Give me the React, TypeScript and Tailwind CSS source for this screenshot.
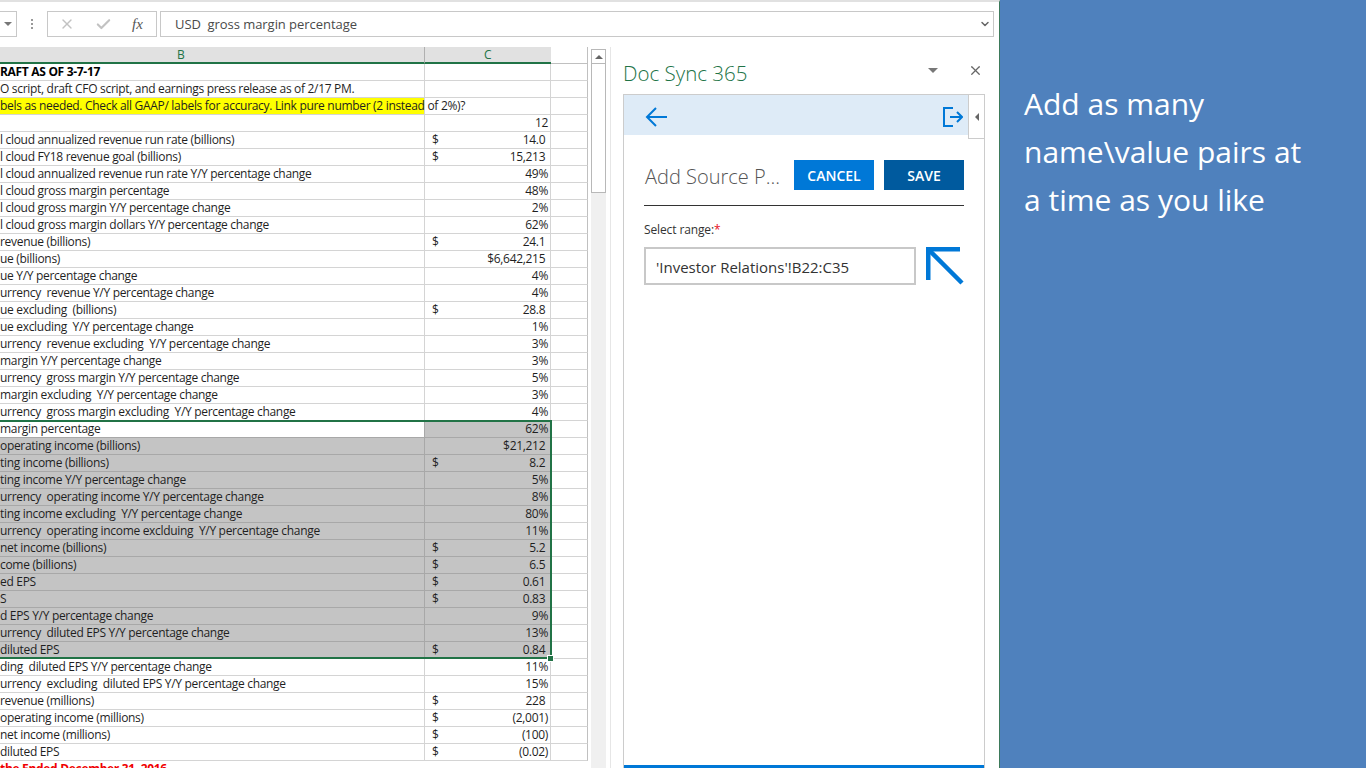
import { X, Check, ChevronDown } from "lucide-react";

type Row = { b?: string; d?: boolean; c?: string };

const rows: Row[] = [
	{ b: "RAFT AS OF 3-7-17" },
	{ b: "O script, draft CFO script, and earnings press release as of 2/17 PM." },
	{ b: "bels as needed. Check all GAAP/ labels for accuracy. Link pure number (2 instead of 2%)?" },
	{ c: "12" },
	{ b: "l cloud annualized revenue run rate (billions)", d: true, c: "14.0 " },
	{ b: "l cloud FY18 revenue goal (billions)", d: true, c: "15,213 " },
	{ b: "l cloud annualized revenue run rate Y/Y percentage change", c: "49%" },
	{ b: "l cloud gross margin percentage", c: "48%" },
	{ b: "l cloud gross margin Y/Y percentage change", c: "2%" },
	{ b: "l cloud gross margin dollars Y/Y percentage change", c: "62%" },
	{ b: "revenue (billions)", d: true, c: "24.1 " },
	{ b: "ue (billions)", c: "$6,642,215 " },
	{ b: "ue Y/Y percentage change", c: "4%" },
	{ b: "urrency  revenue Y/Y percentage change", c: "4%" },
	{ b: "ue excluding  (billions)", d: true, c: "28.8 " },
	{ b: "ue excluding  Y/Y percentage change", c: "1%" },
	{ b: "urrency  revenue excluding  Y/Y percentage change", c: "3%" },
	{ b: "margin Y/Y percentage change", c: "3%" },
	{ b: "urrency  gross margin Y/Y percentage change", c: "5%" },
	{ b: "margin excluding  Y/Y percentage change", c: "3%" },
	{ b: "urrency  gross margin excluding  Y/Y percentage change", c: "4%" },
];

const selected: Row[] = [
	{ b: "margin percentage", c: "62%" },
	{ b: "operating income (billions)", c: "$21,212 " },
	{ b: "ting income (billions)", d: true, c: "8.2 " },
	{ b: "ting income Y/Y percentage change", c: "5%" },
	{ b: "urrency  operating income Y/Y percentage change", c: "8%" },
	{ b: "ting income excluding  Y/Y percentage change", c: "80%" },
	{ b: "urrency  operating income exclduing  Y/Y percentage change", c: "11%" },
	{ b: "net income (billions)", d: true, c: "5.2 " },
	{ b: "come (billions)", d: true, c: "6.5 " },
	{ b: "ed EPS", d: true, c: "0.61 " },
	{ b: "S", d: true, c: "0.83 " },
	{ b: "d EPS Y/Y percentage change", c: "9%" },
	{ b: "urrency  diluted EPS Y/Y percentage change", c: "13%" },
	{ b: "diluted EPS", d: true, c: "0.84 " },
];

const after: Row[] = [
	{ b: "ding  diluted EPS Y/Y percentage change", c: "11%" },
	{ b: "urrency  excluding  diluted EPS Y/Y percentage change", c: "15%" },
	{ b: "revenue (millions)", d: true, c: "228 " },
	{ b: "operating income (millions)", d: true, c: "(2,001)" },
	{ b: "net income (millions)", d: true, c: "(100)" },
	{ b: "diluted EPS", d: true, c: "(0.02)" },
];

function SheetRow({ row, index, shade, first }: { row: Row; index?: number; shade?: boolean; first?: boolean }) {
	const line = shade ? "border-[#a8a8a8]" : "border-[#d4d4d4]";
	const isTitle = index === 0;
	const isNote = index === 2;
	let bgB = "bg-white";
	if (isNote) bgB = "bg-[#ffff00]";
	if (shade && !first) bgB = "bg-[#c4c4c4]";
	const bgC = shade ? "bg-[#c4c4c4]" : "bg-white";
	return (
		<div className="flex h-[17px] w-[588px] text-[12px] leading-[16px]">
			<div className={`relative h-full w-[425px] shrink-0 border-r border-b ${line} ${bgB}`}>
				<span className={`absolute left-0 top-0 whitespace-pre tracking-[-0.31px] ${isTitle ? "font-bold text-black" : "text-[#1f1f1f]"}`}>
					{row.b}
				</span>
			</div>
			<div className={`flex h-full w-[126px] shrink-0 justify-between border-r border-b ${line} ${bgC} pl-[7px] pr-[2px] tracking-[-0.31px] text-[#1f1f1f]`}>
				<span>{row.d ? "$" : ""}</span>
				<span className="whitespace-pre">{row.c}</span>
			</div>
			<div className="h-full w-[37px] shrink-0 border-r border-b border-[#d4d4d4] border-r-[#c0c0c0] bg-white" />
		</div>
	);
}

function ExitIcon() {
	return (
		<svg width="20" height="20" viewBox="0 0 20 20" fill="none" stroke="#0078d7" strokeWidth="2">
			<path d="M10 1H1v18h9" />
			<path d="M7 10h12M14 5l5 5-5 5" />
		</svg>
	);
}

export default function App() {
	return (
		<div className="flex h-[768px] w-[1366px] overflow-hidden bg-white font-['Open_Sans',sans-serif]">
			<div className="flex w-[1000px] shrink-0 flex-col border-t-2 border-[#e1e1e1] border-r border-r-[#3d7a5a]">
				<div className="flex h-[45px] shrink-0 pt-[9px] text-[13px]">
					<div className="flex h-[26px] w-[17px] items-center justify-end border border-l-0 border-[#c8c8c8] pr-[4px]">
						<span className="h-0 w-0 border-x-[4px] border-t-[4px] border-x-transparent border-t-[#777]" />
					</div>
					<div className="flex h-[26px] w-[30px] items-center justify-center">
						<div className="flex flex-col gap-[2px]">
							<span className="h-[2px] w-[2px] bg-[#999]" />
							<span className="h-[2px] w-[2px] bg-[#999]" />
							<span className="h-[2px] w-[2px] bg-[#999]" />
						</div>
					</div>
					<div className="flex h-[26px] w-[110px] items-center border border-[#c8c8c8] pl-[11px] text-[#666]">
						<X size={16} strokeWidth={2} className="text-[#c2c2c2]" />
						<Check size={17} strokeWidth={3} className="ml-[20px] text-[#c2c2c2]" />
						<span className="ml-[20px] font-['Liberation_Serif',serif] text-[15px] italic leading-none text-[#555]">
							fx
						</span>
					</div>
					<div className="ml-[3px] flex h-[26px] w-[834px] items-center justify-between border border-[#c8c8c8] pl-[14px] pr-[2px] text-[#4a4a4a]">
						<span className="whitespace-pre pt-[1px] tracking-[-0.05px]">USD  gross margin percentage</span>
						<ChevronDown size={12} strokeWidth={3} className="text-[#666]" />
					</div>
				</div>
				<div className="flex min-h-0 flex-1">
					<div className="w-[588px] shrink-0 overflow-hidden">
						<div className="flex h-[17px] w-[588px] text-[12px] leading-[15px] text-[#217346]">
							<div className="h-full w-[425px] border-b-2 border-r border-[#217346] border-r-[#b0b0b0] bg-[#e1e1e1] pl-[177px]">B</div>
							<div className="h-full w-[126px] border-b-2 border-[#217346] bg-[#e1e1e1] pl-[59px]">C</div>
							<div className="h-full w-[37px] border-b border-r border-[#c0c0c0]" />
						</div>
						{rows.map((row, i) => (
							<SheetRow key={i} row={row} index={i} />
						))}
						<div className="relative">
							{selected.map((row, i) => (
								<SheetRow key={i} row={row} shade first={i === 0} />
							))}
							<div className="absolute -top-px left-[-2px] h-[239px] w-[554px] border-2 border-[#217346]" />
							<div className="absolute left-[548px] top-[235px] h-[5px] w-[5px] bg-[#217346] outline outline-1 outline-white" />
						</div>
						{after.map((row, i) => (
							<SheetRow key={i} row={row} />
						))}
						<div className="h-[17px] w-[425px] whitespace-pre text-[12px] font-bold leading-[16px] tracking-[-0.31px] text-[#f00000]">
							the Ended December 31, 2016
						</div>
					</div>
					<div className="ml-[3px] mt-[2px] flex w-[15px] shrink-0 flex-col bg-[#f0f0f0]">
						<div className="flex h-[15px] shrink-0 items-center justify-center border border-[#b8b8b8] bg-white">
							<span className="h-0 w-0 border-x-[4px] border-b-[4px] border-x-transparent border-b-[#666]" />
						</div>
						<div className="h-[129px] shrink-0 border border-t-0 border-[#b8b8b8] bg-white" />
					</div>
					<div className="ml-[4px] flex w-[389px] flex-col border-l border-[#e6e6e6] pl-[12px] pr-[14px]">
						<div className="flex h-[47px] shrink-0 items-center justify-between pr-[2px]">
							<span className="pt-[6px] text-[20.5px] font-light leading-none text-[#217346]">Doc Sync 365</span>
							<div className="flex items-center gap-[30px]">
								<span className="h-0 w-0 border-x-[5px] border-t-[5px] border-x-transparent border-t-[#777]" />
								<X size={15} strokeWidth={2} className="text-[#666]" />
							</div>
						</div>
						<div className="flex min-h-0 flex-1 flex-col border border-b-0 border-[#ccc]">
							<div className="flex h-[40px] shrink-0 items-center justify-between bg-[#deebf7]">
								<svg width="22" height="22" viewBox="0 0 22 22" fill="none" stroke="#0078d7" strokeWidth="2" className="ml-[21px] mt-[4px]">
									<path d="M22 11H2M11 2l-9 9 9 9" />
								</svg>
								<div className="mr-[21px] mt-[3px]">
									<ExitIcon />
								</div>
							</div>
							<div className="relative flex-1 px-[20px]">
								<div className="flex h-[71px] items-start justify-between border-b border-[#333] pt-[25px]">
									<span className="ml-[1px] pt-[7px] text-[20px] font-light leading-none text-[#555]">Add Source P...</span>
									<div className="flex gap-[10px]">
										<button className="h-[30px] w-[80px] bg-[#0078d7] text-[14px] font-semibold text-white">CANCEL</button>
										<button className="h-[30px] w-[80px] bg-[#005a9e] text-[14px] font-semibold text-white">SAVE</button>
									</div>
								</div>
								<div className="mt-[16px] text-[12px] leading-[16px] tracking-[-0.12px] text-[#333]">
									Select range:<span className="text-[#e81123]">*</span>
								</div>
								<div className="mt-[9px] flex items-start">
									<div className="flex h-[38px] w-[272px] items-center border-2 border-[#c8c8c8] pl-[10px] pt-[2px] text-[15px] text-[#333]">
										'Investor Relations'!B22:C35
									</div>
									<svg width="38" height="38" viewBox="0 0 38 38" fill="none" stroke="#0078d7" strokeWidth="4.5" className="ml-[10px]">
										<path d="M34 2.25H2.25V33" />
										<path d="M3 3l33 33" />
									</svg>
								</div>
								<div className="absolute -top-[40px] right-0 flex h-[44px] w-[16px] items-center justify-center border border-r-0 border-t-0 border-[#ccc] bg-white">
									<span className="h-0 w-0 border-y-[4px] border-r-[4px] border-y-transparent border-r-[#666]" />
								</div>
							</div>
							<div className="h-[3px] shrink-0 bg-[#0078d7]" />
						</div>
					</div>
				</div>
			</div>
			<div className="flex-1 bg-[#4f81bd] pl-[24px] pt-[80px] text-[30px] leading-[48px] text-white">
				Add as many
				<br />
				name\value pairs at
				<br />
				a time as you like
			</div>
		</div>
	);
}
